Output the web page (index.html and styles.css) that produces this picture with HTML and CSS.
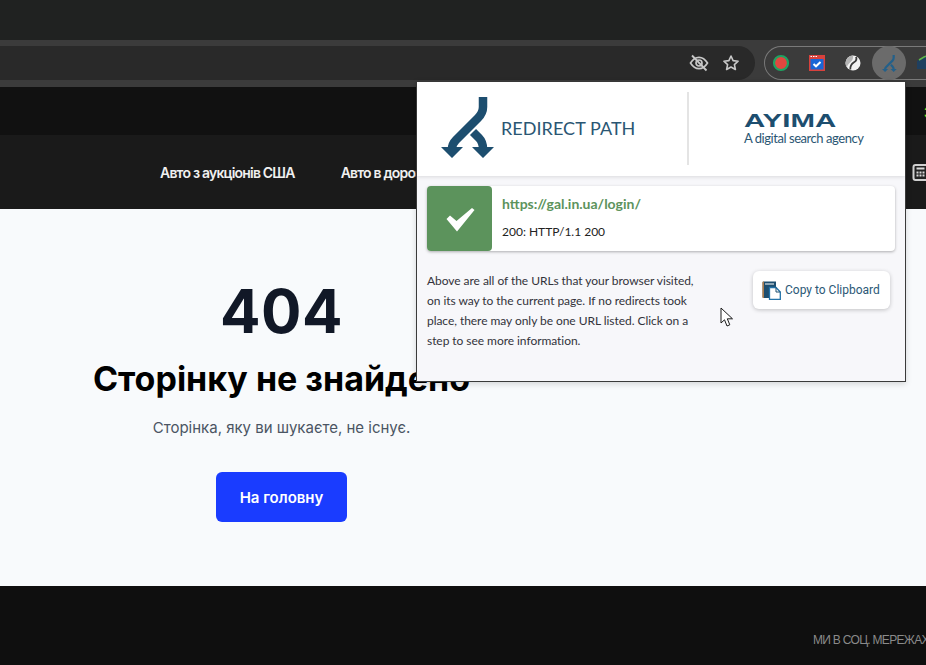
FILE: index.html
```html
<!DOCTYPE html>
<html lang="uk">
<head>
<meta charset="utf-8">
<title>404</title>
<link rel="stylesheet" href="styles.css">
</head>
<body>
<div class="tabstrip"></div>
<div class="toolbar">
  <div class="omnibox">
    <svg class="omni-icon" width="20" height="20" viewBox="0 0 20 20" fill="none" stroke="#c8c8c8" stroke-width="1.7"><path d="M1.500 10C4 6 7 4.300 10 4.300S16 6 18.500 10C16 14 13 15.700 10 15.700S4 14 1.500 10Z"/><circle cx="10" cy="10" r="3"/><path d="M3 2.500 17.500 17.500" stroke-width="1.800"/></svg>
    <svg class="omni-icon" width="18" height="18" viewBox="0 0 18 18" fill="none" stroke="#c8c8c8" stroke-width="1.6" stroke-linejoin="round"><path d="M9 2l2.100 4.600 5 .6-3.700 3.400 1 4.900L9 13l-4.400 2.500 1-4.900L1.900 7.200l5-.6z"/></svg>
  </div>
  <div class="extensions">
    <span class="ext"><svg width="18" height="18" viewBox="0 0 18 18"><circle cx="9" cy="9" r="7" fill="#e0473f" stroke="#1ea362" stroke-width="2.200"/></svg></span>
    <span class="ext"><svg width="18" height="18" viewBox="0 0 18 18"><rect x="1" y="1" width="16" height="16" fill="#d8413c"/><rect x="2.500" y="5" width="13" height="10.500" fill="#1a66d6"/><path d="M2.500 2.500h1.500M5 2.500h1.500M7.500 2.500H9" stroke="#fff" stroke-width="1"/><path d="M5.500 10l2.500 2.300 4.500-4.300" fill="none" stroke="#fff" stroke-width="2"/></svg></span>
    <span class="ext"><svg width="18" height="18" viewBox="0 0 18 18"><circle cx="9" cy="9" r="7.500" fill="#f2f2f2"/><path d="M9 1.500A7.500 7.500 0 0 0 1.500 9c0 1.500.5 3 1.300 4.200C4 10 6 8.500 7.500 7 8.700 5.800 9.500 3.500 9 1.500Z" fill="#b4b4b4"/><path d="M12 2.800C13 5 12 7 10 8.300S6 11 6.300 15.500" fill="none" stroke="#3b3b3b" stroke-width="1.800"/></svg></span>
    <span class="ext ext-active"><svg width="15" height="17" viewBox="0 0 54 61"><g fill="none" stroke="#23608a" stroke-width="8"><path d="M42 0V10Q42 16 37 21L15 43Q11 47 11 52"/><path d="M32 35L38 41Q42 45 42 52"/></g><path d="M0 50H22L11 61ZM31 50H53L42 61Z" fill="#23608a"/></svg></span>
    <span class="ext"><svg width="18" height="18" viewBox="0 0 18 18"><path d="M1 15V7l5-3 6-2 5 1v12Z" fill="#1f3f5f"/><path d="M3 6l5-3 3-1" fill="none" stroke="#5fb84a" stroke-width="1.500"/></svg></span>
  </div>
</div>

<header class="site-top"><span class="site-top-text">3</span></header>
<nav class="site-nav">
  <a class="nav-link">Авто з аукціонів США</a>
  <a class="nav-link">Авто в дорозі</a>
  <svg class="calc" width="20" height="20" viewBox="0 0 20 20"><rect x="1.500" y="3" width="14" height="15" rx="2" fill="#222" stroke="#d0d0d0" stroke-width="2"/><path d="M4.500 5.500h8v2h-8zM4.500 9.500h2v2h-2zM7.500 9.500h2v2h-2zM10.500 9.500h2v2h-2zM4.500 12.500h2v2h-2zM7.500 12.500h2v2h-2zM10.500 12.500h2v2h-2z" fill="#d8d8d8"/></svg>
</nav>

<main class="notfound">
  <div class="notfound-col">
    <div class="code">404</div>
    <h1 class="title">Сторінку не знайдено</h1>
    <p class="lead">Сторінка, яку ви шукаєте, не існує.</p>
    <a class="home-btn">На головну</a>
  </div>
</main>

<footer class="site-footer"><span class="footer-text">МИ В СОЦ. МЕРЕЖАХ</span></footer>

<aside class="popup">
  <div class="popup-head">
    <div class="brand">
      <svg class="brand-mark" width="54" height="61" viewBox="0 0 54 61"><g fill="none" stroke="#1d4e6f" stroke-width="8.500"><path d="M42 0V10Q42 16 37 21L15 43Q11 47 11 52"/><path d="M32 35L38 41Q42 45 42 52"/></g><path d="M0 50H22L11 61ZM31 50H53L42 61Z" fill="#1d4e6f"/></svg>
      <span class="brand-name">REDIRECT PATH</span>
    </div>
    <div class="head-divider"></div>
    <div class="agency">
      <span class="agency-name">AYIMA</span>
      <span class="agency-sub">A digital search agency</span>
    </div>
  </div>
  <div class="popup-body">
    <div class="hop">
      <div class="hop-status"><svg width="32" height="26" viewBox="0 0 32 26"><path d="M2.500 13L6 9.500 12.500 15 28 2 30.500 4 13 25.500Z" fill="#fff"/></svg></div>
      <div class="hop-info">
        <div class="hop-url">https://gal.in.ua/login/</div>
        <div class="hop-code">200: HTTP/1.1 200</div>
      </div>
    </div>
    <div class="popup-foot">
      <p class="help">Above are all of the URLs that your browser visited, on its way to the current page. If no redirects took place, there may only be one URL listed. Click on a step to see more information.</p>
      <button class="copy-btn">
        <svg width="19" height="19" viewBox="0 0 19 19"><path d="M0.500 1.500A1 1 0 0 1 1.500 0.500H14V6H9V17H1.500A1 1 0 0 1 0.500 16Z" fill="#1d4e6f"/><path d="M0.500 1.500A1 1 0 0 1 1.500 0.500H1.800V17H1.500A1 1 0 0 1 0.500 16Z" fill="#d08a48"/><path d="M3 3H12" stroke="#fff" stroke-width="1"/><path d="M7.500 6.500H14L18.300 11V18.300H7.500Z" fill="#fff" stroke="#2272a8" stroke-width="1.300"/><path d="M14 6.500V11H18.300" fill="none" stroke="#1d4e6f" stroke-width="1"/></svg>
        <span>Copy to Clipboard</span>
      </button>
    </div>
  </div>
</aside>

<svg class="cursor" width="14" height="21" viewBox="0 0 14 21"><path d="M1 1V16L4.500 12.800 7 19 9.800 17.800 7.300 11.800H12.500Z" fill="#fff" stroke="#1a1a1a" stroke-width="1"/></svg>
</body>
</html>
```
FILE: styles.css
```css
* { box-sizing: border-box; }
html, body { margin: 0; padding: 0; }
body {
  width: 926px;
  height: 665px;
  overflow: hidden;
  position: relative;
  background: #0f0f0f;
  font-family: "Inter", sans-serif;
}

.tabstrip { height: 40px; background: #202221; }
.toolbar {
  height: 47px;
  padding: 6px 0 7px;
  background: #3b3b3b;
  display: flex;
  overflow: hidden;
}
.omnibox {
  width: 755px;
  flex: none;
  background: #292929;
  border-radius: 0 17px 17px 0;
  display: flex;
  align-items: center;
  justify-content: flex-end;
  gap: 13px;
  padding-right: 15px;
}
.extensions {
  flex: none;
  margin-left: 9px;
  width: 200px;
  box-shadow: inset 0 0 0 1px #7a7a7a;
  border-radius: 17px 0 0 17px;
  display: flex;
  align-items: center;
  gap: 2px;
}
.ext {
  width: 34px;
  height: 34px;
  flex: none;
  display: flex;
  align-items: center;
  justify-content: center;
}
.ext-active { background: #6b6b6b; border-radius: 50%; }

.site-top {
  height: 48px;
  background: #111;
  color: #7fe020;
  font-size: 14px;
  font-weight: 700;
  display: flex;
  align-items: center;
  padding: 2px 0 0 924px;
  overflow: hidden;
}
.site-nav {
  height: 74px;
  background: #1a1a1a;
  display: flex;
  align-items: center;
  padding-left: 160px;
  gap: 46px;
  overflow: hidden;
  position: relative;
}
.nav-link {
  color: #f0f0f0;
  font-size: 14px;
  font-weight: 600;
  letter-spacing: -0.8px;
  white-space: nowrap;
}
.calc { margin-left: auto; margin-right: -6px; flex: none; }

.notfound {
  height: 377px;
  background: #f8fafc;
}
.notfound-col {
  width: 563px;
  padding-top: 66px;
  display: flex;
  flex-direction: column;
  align-items: center;
}
.code {
  font-size: 60px;
  line-height: 72px;
  font-weight: 700;
  color: #111827;
  letter-spacing: 0.5px;
}
.title {
  margin: 12px 0 0;
  font-size: 34px;
  line-height: 40px;
  font-weight: 700;
  color: #000;
  white-space: nowrap;
}
.lead {
  margin: 17px 0 0;
  font-size: 15px;
  line-height: 24px;
  color: #4b5563;
}
.home-btn {
  margin-top: 32px;
  width: 131px;
  height: 50px;
  border-radius: 6px;
  background: #1a3cff;
  color: #fff;
  font-size: 15px;
  font-weight: 600;
  display: flex;
  align-items: center;
  justify-content: center;
}

.site-footer {
  height: 79px;
  background: #0f0f0f;
  padding: 46px 0 0 813px;
  overflow: hidden;
}
.footer-text {
  display: block;
  width: 150px;
  font-family: "Liberation Sans", sans-serif;
  font-size: 12px;
  line-height: 16px;
  letter-spacing: -0.7px;
  color: #8a8a8a;
  white-space: nowrap;
}

/* Extension popup floats over the page */
.popup {
  position: absolute;
  left: 416px;
  top: 81px;
  width: 490px;
  height: 301px;
  background: #f7f7fa;
  border: 1px solid #3a3a3a;
  box-shadow: 0 2px 6px rgba(0, 0, 0, 0.15);
  font-family: "Lato", sans-serif;
  display: flex;
  flex-direction: column;
}
.popup-head {
  height: 94px;
  flex: none;
  background: #fff;
  box-shadow: 0 1px 4px rgba(0, 0, 0, 0.12);
  display: flex;
  align-items: center;
}
.brand {
  width: 270px;
  padding-left: 24px;
  display: flex;
  align-items: center;
  gap: 6px;
  flex: none;
}
.brand-mark { flex: none; margin-bottom: 3px; }
.brand-name {
  font-size: 18px;
  color: #2a5673;
  letter-spacing: 0.05px;
  white-space: nowrap;
  padding-bottom: 2px;
}
.head-divider {
  width: 2px;
  height: 73px;
  background: #e4e4e4;
  flex: none;
  margin-bottom: 2px;
}
.agency {
  flex: 1;
  padding: 2px 0 0 55px;
  display: flex;
  flex-direction: column;
  align-items: flex-start;
}
.agency-name {
  font-family: "Liberation Sans", sans-serif;
  font-size: 19px;
  line-height: 15px;
  font-weight: 700;
  color: #1d4e6f;
  transform: scaleX(1.55);
  transform-origin: left center;
  margin-bottom: 2px;
}
.agency-sub {
  font-size: 13px;
  line-height: 17px;
  letter-spacing: -0.45px;
  color: #2a5673;
  white-space: nowrap;
}
.popup-body {
  flex: 1;
  padding: 10px 10px 0;
}
.hop {
  height: 65px;
  background: #fff;
  border-radius: 4px;
  box-shadow: 0 1px 3px rgba(0, 0, 0, 0.3);
  display: flex;
}
.hop-status {
  width: 65px;
  flex: none;
  background: #5c935c;
  border-radius: 4px;
  display: flex;
  align-items: center;
  justify-content: center;
}
.hop-info { padding: 9px 0 0 10px; }
.hop-url {
  font-size: 14px;
  line-height: 18px;
  font-weight: 700;
  color: #5c935c;
}
.hop-code {
  margin-top: 10px;
  font-size: 12px;
  line-height: 18px;
  color: #222;
}
.popup-foot {
  display: flex;
  justify-content: space-between;
  align-items: flex-start;
  padding: 20px 5px 0 0;
}
.help {
  margin: 0;
  width: 272px;
  font-size: 12px;
  line-height: 20px;
  letter-spacing: -0.05px;
  color: #33333a;
}
.copy-btn {
  margin: 0;
  width: 137px;
  height: 38px;
  border: 0;
  border-radius: 6px;
  background: #fff;
  box-shadow: 0 1px 4px rgba(0, 0, 0, 0.22);
  font-family: "Roboto", sans-serif;
  font-size: 12px;
  color: #2b5876;
  display: flex;
  align-items: center;
  gap: 4px;
  padding: 0 0 0 9px;
  white-space: nowrap;
}

.cursor {
  position: absolute;
  left: 720px;
  top: 307px;
}
```
